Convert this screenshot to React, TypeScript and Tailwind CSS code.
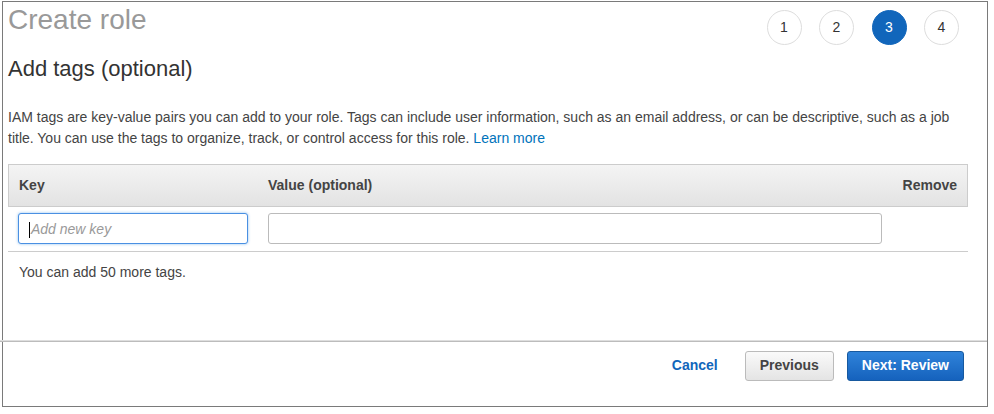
import React from "react";

const font = { fontFamily: '"Liberation Sans", Arial, sans-serif' };

function Step({ n, active }: { n: number; active?: boolean }) {
  return (
    <div
      className={
        active
          ? "w-[35px] h-[35px] rounded-full bg-[#1166bb] border border-[#1166bb] text-white flex items-center justify-center text-[14px]"
          : "w-[35px] h-[35px] rounded-full bg-white border border-[#dddddd] text-[#333] flex items-center justify-center text-[14px]"
      }
    >
      {n}
    </div>
  );
}

export default function App() {
  return (
    <div className="w-[994px] h-[414px] bg-white overflow-hidden" style={font}>
      <div className="ml-[2px] mt-[1px] w-[986px] h-[406px] border border-[#7a7a7a] flex flex-col">
        <div className="pl-[5px] pr-[19px]">
          <div className="flex justify-between items-start">
            <h1 className="pt-[2px] text-[28px] leading-[32px] text-[#999999] font-normal">Create role</h1>
            <div className="mt-[8px] mr-[9px] flex gap-[17.5px]">
              <Step n={1} />
              <Step n={2} />
              <Step n={3} active />
              <Step n={4} />
            </div>
          </div>
          <h2 className="mt-[11px] text-[22px] leading-[25px] text-[#333333] font-normal">Add tags (optional)</h2>
          <p className="mt-[26px] text-[14px] leading-[21px] text-[#444444]">
            IAM tags are key-value pairs you can add to your role. Tags can include user information, such as an email
            address, or can be descriptive, such as a job title. You can use the tags to organize, track, or control
            access for this role. <span className="text-[#0073bb]">Learn more</span>
          </p>

          <div className="mt-[15px]">
            <div className="grid grid-cols-[249px_624px_1fr] h-[43px] items-center border border-[#cccccc] bg-gradient-to-b from-[#f4f4f4] to-[#e3e3e3] text-[14px] font-bold text-[#444444]">
              <div className="pl-[10px]">Key</div>
              <div className="pl-[10px]">Value (optional)</div>
              <div className="pr-[10px] text-right">Remove</div>
            </div>
            <div className="grid grid-cols-[249px_624px_1fr] px-[1px] pt-[6px] pb-[7px] border-b border-[#cccccc]">
              <div className="pl-[9px]">
                <div className="w-[230px] h-[31px] rounded-[3px] border border-[#4a90e2] shadow-[0_0_3px_rgba(0,115,220,0.45)] bg-white flex items-center pl-[10px] pt-[2px]">
                  <span className="w-px h-[16px] bg-black" />
                  <span className="ml-[1px] text-[14px] italic text-[#999999]">Add new key</span>
                </div>
              </div>
              <div className="pl-[10px]">
                <div className="w-[614px] h-[31px] rounded-[3px] border border-[#bbbbbb] bg-white" />
              </div>
              <div />
            </div>
            <div className="mt-[10px] pl-[11px] text-[14px] leading-[20px] text-[#444444]">You can add 50 more tags.</div>
          </div>
        </div>

        <div className="mt-auto -ml-[3px] pb-[25px]">
          <div className="h-px bg-[#dedede]" />
          <div className="h-px bg-[#bcbcbc]" />
          <div className="pt-[9px] pr-[23px] flex justify-end items-center">
            <span className="text-[14px] leading-[16px] font-bold text-[#1166bb] mr-[27px] -mt-[2px]">Cancel</span>
            <div className="h-[30px] px-[14px] pb-[1px] flex items-center rounded-[3px] border border-[#bbbbbb] bg-gradient-to-b from-[#fafafa] to-[#e4e4e4] text-[14px] font-bold text-[#444444] mr-[13px]">
              Previous
            </div>
            <div className="h-[30px] px-[14px] pb-[1px] flex items-center rounded-[3px] border border-[#17599f] bg-gradient-to-b from-[#2f83da] to-[#1562bd] text-[14px] font-bold text-white">
              Next: Review
            </div>
          </div>
        </div>
      </div>
    </div>
  );
}
